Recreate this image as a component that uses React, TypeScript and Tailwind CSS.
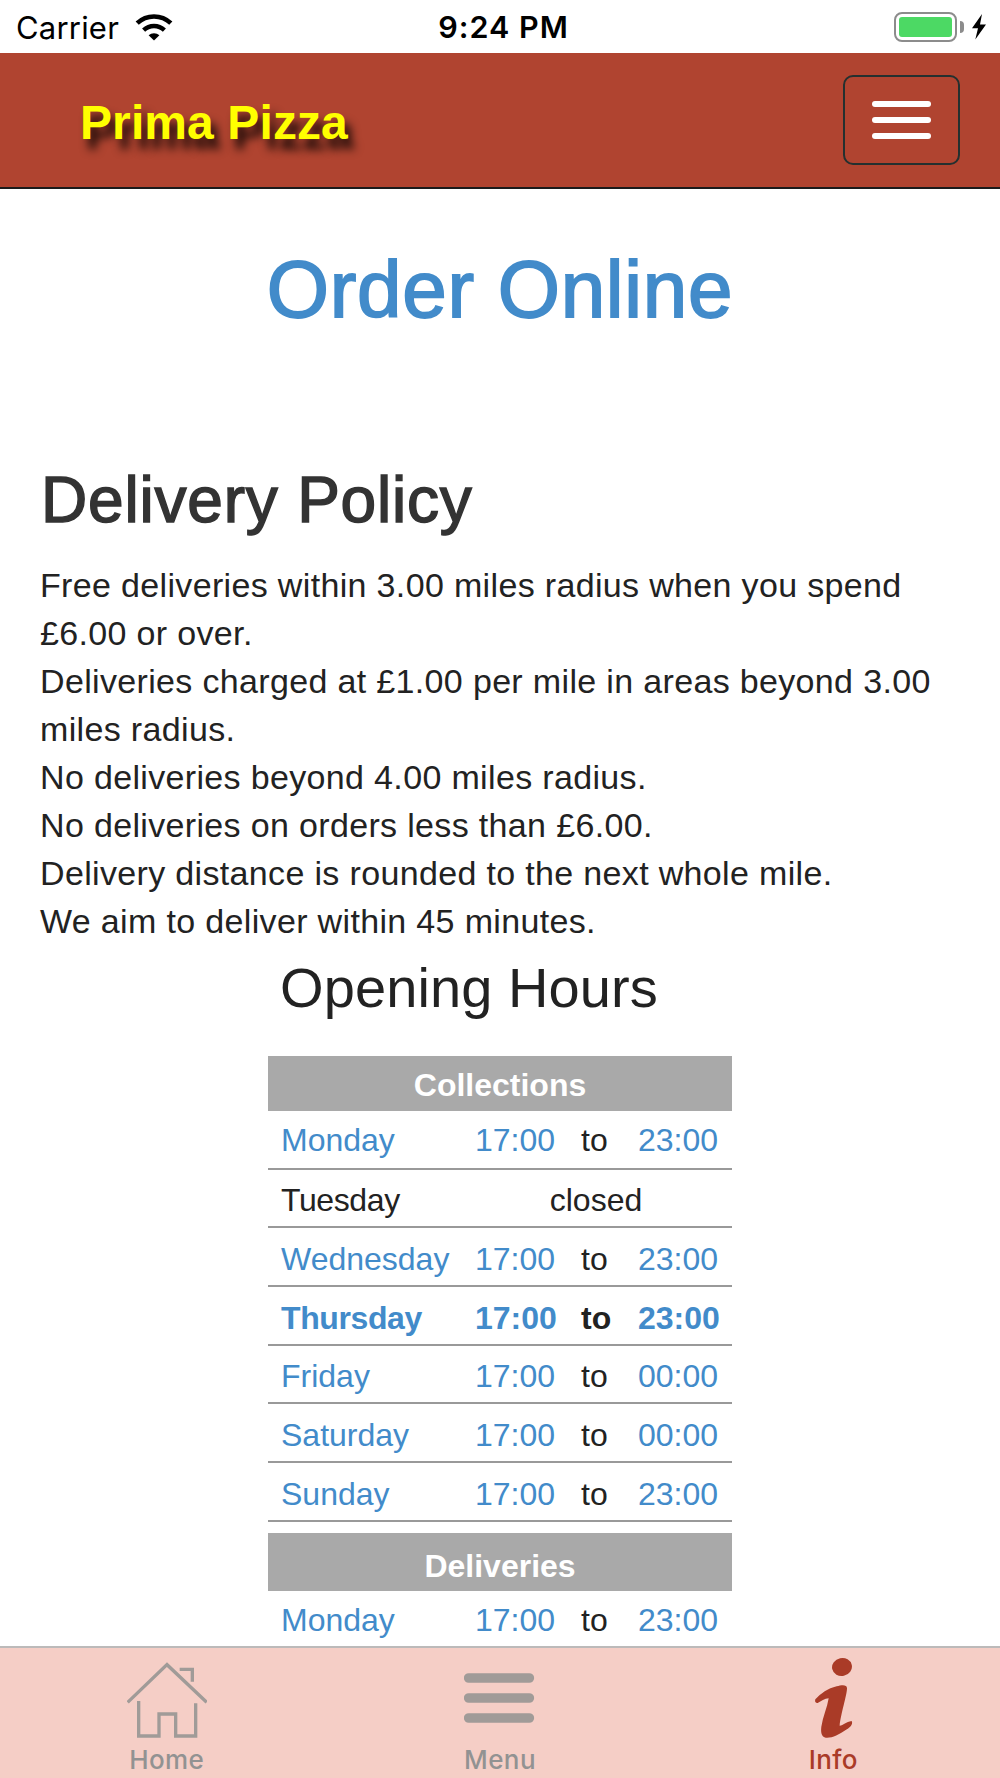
import type { ReactNode } from 'react'
import clsx from 'clsx'

interface OpeningDay {
  day: string
  from?: string
  to?: string
  today?: boolean
}

const policy = [
  'Free deliveries within 3.00 miles radius when you spend £6.00 or over.',
  'Deliveries charged at £1.00 per mile in areas beyond 3.00 miles radius.',
  'No deliveries beyond 4.00 miles radius.',
  'No deliveries on orders less than £6.00.',
  'Delivery distance is rounded to the next whole mile.',
  'We aim to deliver within 45 minutes.',
]

const collections: OpeningDay[] = [
  { day: 'Monday', from: '17:00', to: '23:00' },
  { day: 'Tuesday' },
  { day: 'Wednesday', from: '17:00', to: '23:00' },
  { day: 'Thursday', from: '17:00', to: '23:00', today: true },
  { day: 'Friday', from: '17:00', to: '00:00' },
  { day: 'Saturday', from: '17:00', to: '00:00' },
  { day: 'Sunday', from: '17:00', to: '23:00' },
]

const deliveries: OpeningDay[] = [{ day: 'Monday', from: '17:00', to: '23:00' }]

function StatusBar() {
  return (
    <div className="h-[53px] shrink-0 grid grid-cols-3 items-center bg-white pt-px text-black font-[Inter,sans-serif] text-[31px] leading-none">
      <div className="flex items-center pl-4">
        <span className="tracking-[0.2px]">Carrier</span>
        <svg className="ml-4 w-[38px] h-[27px]" viewBox="0 0 38 27">
          <path d="M19 26.5 13.6 21.3a7.8 7.8 0 0 1 10.8 0Z" />
          <path d="M8.6 16.2a15 15 0 0 1 20.8 0" fill="none" stroke="#000" strokeWidth="4.4" />
          <path d="M2.2 9.2a24.5 24.5 0 0 1 33.6 0" fill="none" stroke="#000" strokeWidth="4.6" />
        </svg>
      </div>
      <div className="pl-[7px] text-center text-[30.5px] font-semibold tracking-[1px]">9:24 PM</div>
      <div className="flex items-center justify-end pr-[13px]">
        <div className="w-[63px] h-[30px] rounded-[8px] border-2 border-[#8c8c8c] p-[3px]">
          <div className="w-full h-full rounded-[3px] bg-[#4cd964]" />
        </div>
        <div className="ml-[3px] w-1 h-[12px] rounded-r-full bg-[#8c8c8c]" />
        <svg className="ml-[7px] w-4 h-[26px]" viewBox="0 0 16 26">
          <path d="M11 0 1 14.2h6L4.3 25.6 15 10.6H9Z" />
        </svg>
      </div>
    </div>
  )
}

function Navbar() {
  return (
    <header className="h-[136px] shrink-0 flex items-start justify-between bg-[#b04430] border-b-2 border-[#1b1b1b] pl-20 pr-10">
      <div className="mt-[42px] text-[48px] leading-[56px] tracking-[0.1px] font-bold text-[#ffff00] [text-shadow:6px_10px_10px_rgba(0,0,0,0.9)]">
        Prima Pizza
      </div>
      <button className="mt-[22px] w-[117px] h-[90px] rounded-[10px] border-2 border-[#24302f] flex flex-col items-center justify-center gap-[10px]">
        <span className="w-[59px] h-[6px] rounded-full bg-white" />
        <span className="w-[59px] h-[6px] rounded-full bg-white" />
        <span className="w-[59px] h-[6px] rounded-full bg-white" />
      </button>
    </header>
  )
}

function HoursRow({ entry, first }: { entry: OpeningDay; first: boolean }) {
  const open = Boolean(entry.from)

  return (
    <div
      className={clsx(
        'h-[58.67px] flex items-center border-b-2 border-[#999999]',
        first ? 'pt-[2px]' : 'pt-[5px]',
        entry.today && 'font-bold',
      )}
    >
      <div
        className={clsx(
          'w-[194px] pl-[13px]',
          open && 'text-[#428bca]',
          entry.today && 'tracking-[-0.4px]',
          !open && 'tracking-[-0.4px]',
        )}
      >
        {entry.day}
      </div>
      {open ? (
        <>
          <div className="w-[107px] pl-[13px] text-[#428bca]">{entry.from}</div>
          <div className="w-[56px] pl-3">to</div>
          <div className="pl-[13px] text-[#428bca]">{entry.to}</div>
        </>
      ) : (
        <div className="flex-1 pr-[2px] text-center">closed</div>
      )}
    </div>
  )
}

function TabItem({ label, active, children }: { label: string; active?: boolean; children: ReactNode }) {
  return (
    <button
      className={clsx('flex flex-col items-center pt-[9px]', active ? 'text-[#aa3b27]' : 'text-[#929292]')}
    >
      {children}
      <span className="mt-[5px] font-[Inter,sans-serif] text-[26px] leading-8 font-medium tracking-[0.4px]">
        {label}
      </span>
    </button>
  )
}

export default function App() {
  return (
    <div className="w-[1000px] h-[1778px] flex flex-col overflow-hidden bg-white text-[#222222] font-['Liberation_Sans',Arial,sans-serif]">
      <StatusBar />
      <Navbar />

      <main className="flex-1 min-h-0 overflow-hidden">
        <h1 className="pt-[57px] text-center text-[80px] leading-[88px] tracking-[0.7px] text-[#428bca] [-webkit-text-stroke:1.8px_#428bca]">
          Order Online
        </h1>

        <section className="mt-[131px] pl-10 pr-8">
          <h2 className="pl-px text-[64px] leading-[70px] tracking-[0.8px] text-[#333333] [-webkit-text-stroke:1.5px_#333333]">
            Delivery Policy
          </h2>
          <div className="mt-[26px] text-[34px] leading-[48px] tracking-[0.34px]">
            {policy.map((line) => (
              <p key={line}>{line}</p>
            ))}
          </div>
        </section>

        <section className="mt-3 mx-auto w-[464px] text-[32px] leading-[36px]">
          <h3 className="pl-3 text-[56px] leading-[62px] tracking-[0.1px]">Opening Hours</h3>
          <div className="mt-[37px] h-[55px] pt-[2px] flex items-center justify-center bg-[#a9a9a9] font-bold text-white">
            Collections
          </div>
          {collections.map((entry, i) => (
            <HoursRow key={entry.day} entry={entry} first={i === 0} />
          ))}
          <div className="mt-[11px] h-[58.33px] pt-2 flex items-center justify-center bg-[#a9a9a9] font-bold text-white">
            Deliveries
          </div>
          {deliveries.map((entry, i) => (
            <HoursRow key={entry.day} entry={entry} first={i === 0} />
          ))}
        </section>
      </main>

      <nav className="h-[132px] shrink-0 grid grid-cols-3 bg-[#f5cec6] border-t-2 border-[#bcbaba]">
        <TabItem label="Home">
          <svg className="w-20 h-[82px]" viewBox="80 66 240 246" fill="none" stroke="#a09b98" strokeWidth="10">
            <path d="M82 202 200 89l119 113" />
            <path d="M238 103h38v37" />
            <path d="M115 198v105h61v-66h50v66h60v-98" />
          </svg>
        </TabItem>
        <TabItem label="Menu">
          <svg
            className="w-[72px] h-[82px]"
            viewBox="101 66 216 246"
            fill="none"
            stroke="#a09b98"
            strokeWidth="29"
            strokeLinecap="round"
          >
            <path d="M115 129h182M115 189h182M115 249h182" />
          </svg>
        </TabItem>
        <TabItem label="Info" active>
          <svg className="w-10 h-[82px]" viewBox="127 66 120 246" fill="#aa3b27">
            <ellipse cx="214" cy="96" rx="30" ry="27" transform="rotate(-12 214 96)" />
            <path d="M134 193C150 176 172 160 198 154C213 150 229 148 229 160C229 180 210 238 207 272C218 272 226 260 243 258C248 268 238 278 225 285C205 299 183 310 165 308C152 306 150 292 152 275C156 246 170 218 174 190C162 190 151 199 141 204C134 205 132 199 134 193Z" />
          </svg>
        </TabItem>
      </nav>
    </div>
  )
}
